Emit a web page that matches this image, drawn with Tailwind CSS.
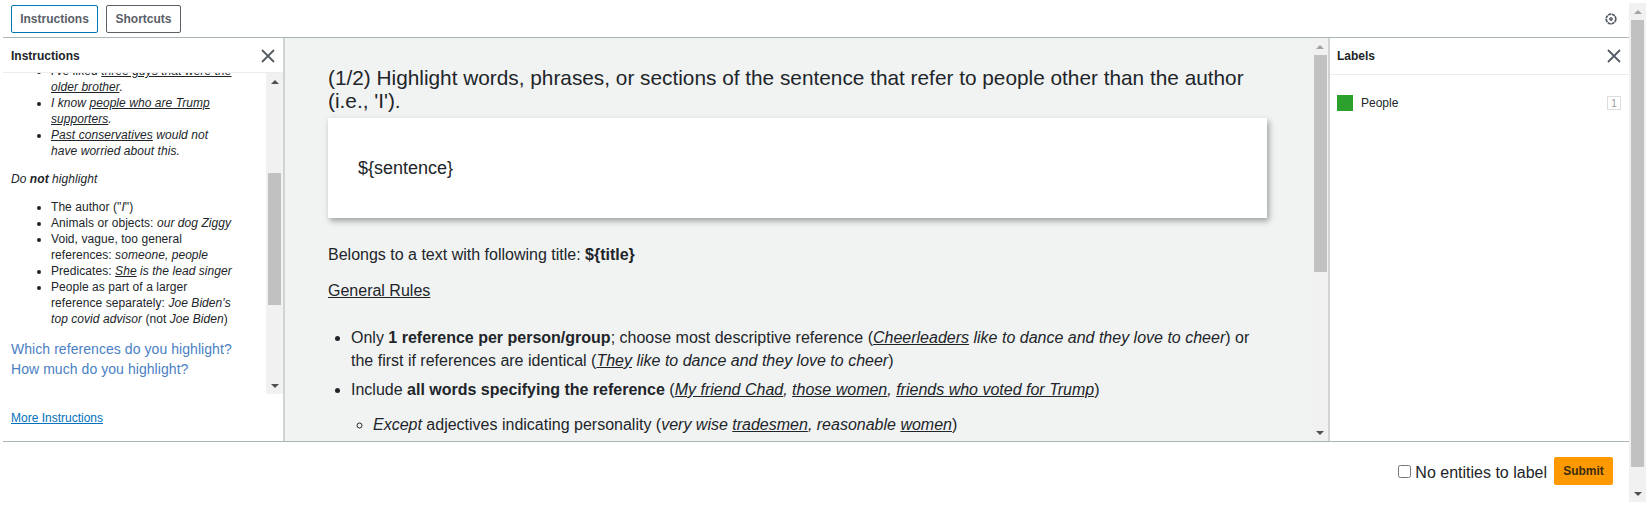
<!DOCTYPE html>
<html lang="en">
<head>
    <meta charset="UTF-8">
    <title>Label Studio task</title>
    <script src="https://cdn.jsdelivr.net/npm/@tailwindcss/browser@4"></script>
</head>
<body class="bg-white font-['Liberation_Sans',Arial,sans-serif] text-[#212529] overflow-hidden">
    <div class="flex h-[499px] mt-[3px] ml-[3px] mr-[6px]">
        <div class="flex flex-col flex-1 min-w-0">
            <!-- Top bar -->
            <div class="flex items-center h-[35px] pb-[2px] pl-[8px] pr-[11px] gap-[8px] border-b border-[#a9b5b5]">
                <button class="h-[28px] w-[87px] rounded-[2px] border border-[#0077b6] text-[12px] font-bold text-[#5a6068]">Instructions</button>
                <button class="h-[28px] w-[75px] rounded-[2px] border border-[#5a6068] text-[12px] font-bold text-[#5a6068]">Shortcuts</button>
                <svg class="ml-auto" width="14" height="14" viewBox="0 0 14 14" fill="none" stroke="#555b63">
                    <circle cx="7" cy="7" r="4.8" stroke-width="1.7" stroke-dasharray="3.2 0.6"/>
                    <circle cx="7" cy="7" r="1.5" fill="#777" stroke-width="0.8"/>
                </svg>
            </div>

            <div class="flex h-[403px] border-b border-[#a9b5b5] box-content">
                <!-- Instructions panel -->
                <div class="flex flex-col w-[282px] border-r-2 border-[#d0d3d3]">
                    <div class="flex items-center justify-between h-[35px] pt-[2px] pl-[8px] pr-[8px] border-b border-[#ececec] text-[12px] font-bold">
                        <span>Instructions</span>
                        <svg width="14" height="14" viewBox="0 0 14 14" stroke="#555b63" stroke-width="1.8"><path d="M1 1l12 12M13 1L1 13"/></svg>
                    </div>
                    <div class="flex h-[321px]">
                        <div class="flex-1 min-w-0 overflow-hidden pl-[8px] text-[12px] leading-[16px] tracking-[0.06px]">
                            <ul class="list-disc pl-[40px] -mt-[10px] w-[223px] italic">
                                <li>I've liked <u>three guys that were the older brother</u>.</li>
                                <li>I know <u>people who are Trump supporters</u>.</li>
                                <li><u>Past conservatives</u> would not have worried about this.</li>
                            </ul>
                            <p class="mt-[12px] italic">Do <b>not</b> highlight</p>
                            <ul class="list-disc pl-[40px] mt-[12px] w-[223px]">
                                <li>The author ("<i>I</i>")</li>
                                <li>Animals or objects: <i>our dog Ziggy</i></li>
                                <li>Void, vague, too general references: <i>someone, people</i></li>
                                <li>Predicates: <i><u>She</u> is the lead singer</i></li>
                                <li>People as part of a larger reference separately: <i>Joe Biden's top covid advisor</i> (not <i>Joe Biden</i>)</li>
                            </ul>
                            <p class="mt-[12px] text-[14px] leading-[20px] tracking-[0.06px] text-[#4a7fc4]">Which references do you highlight?<br>How much do you highlight?</p>
                        </div>
                        <div class="flex flex-col items-center w-[17px] bg-[#f1f1f1]">
                            <div class="flex items-center justify-center h-[17px]"><div class="border-x-[4px] border-b-[4px] border-x-transparent border-b-[#505050]"></div></div>
                            <div class="flex-1 w-[13px]"><div class="w-[13px] h-[132px] mt-[83px] bg-[#c1c1c1]"></div></div>
                            <div class="flex items-center justify-center h-[17px]"><div class="border-x-[4px] border-t-[4px] border-x-transparent border-t-[#505050]"></div></div>
                        </div>
                    </div>
                    <div class="pl-[8px] pt-[16px] text-[12px] leading-[16px]">
                        <a class="underline text-[#0071bc]">More Instructions</a>
                    </div>
                </div>

                <!-- Main task area -->
                <div class="flex flex-1 min-w-0 bg-[#f1f3f3] border-r-2 border-[#d0d3d3]">
                    <div class="flex-1 min-w-0 overflow-hidden pl-[43px] pr-[45px] text-[16px] leading-[23px]">
                        <h1 class="mt-[28px] pr-[15px] text-[20.8px] leading-[23px]">(1/2) Highlight words, phrases, or sections of the sentence that refer to people other than the author (i.e., 'I').</h1>
                        <div class="flex items-center h-[100px] mt-[6px] pl-[30px] bg-white shadow-[2px_3px_6px_rgba(0,0,0,0.35)] text-[18px]">${sentence}</div>
                        <p class="mt-[25px]">Belongs to a text with following title: <b>${title}</b></p>
                        <p class="mt-[13px] underline">General Rules</p>
                        <ul class="list-disc pl-[23px] mt-[24px]">
                            <li>Only <b>1 reference per person/group</b>; choose most descriptive reference (<i><u>Cheerleaders</u> like to dance and they love to cheer</i>) or the first if references are identical (<i><u>They</u> like to dance and they love to cheer</i>)</li>
                            <li class="mt-[6px]">Include <b>all words specifying the reference</b> (<i><u>My friend Chad</u>, <u>those women</u>, <u>friends who voted for Trump</u></i>)
                                <ul class="list-[circle] pl-[22px] mt-[12px]">
                                    <li><i>Except</i> adjectives indicating personality (<i>very wise <u>tradesmen</u>, reasonable <u>women</u></i>)</li>
                                </ul>
                            </li>
                        </ul>
                    </div>
                    <div class="flex flex-col items-start w-[16px] bg-[#f1f1f1]">
                        <div class="flex items-center justify-center w-[15px] h-[17px]"><div class="border-x-[4px] border-b-[4px] border-x-transparent border-b-[#a3a3a3]"></div></div>
                        <div class="flex-1 w-[13px] ml-[2px]"><div class="w-[13px] h-[217px] bg-[#c1c1c1]"></div></div>
                        <div class="flex items-center justify-center w-[15px] h-[17px]"><div class="border-x-[4px] border-t-[4px] border-x-transparent border-t-[#505050]"></div></div>
                    </div>
                </div>

                <!-- Labels panel -->
                <div class="flex flex-col w-[299px]">
                    <div class="flex items-center justify-between h-[37px] pl-[7px] pr-[8px] border-b border-[#ececec] text-[12px] font-bold">
                        <span>Labels</span>
                        <svg width="14" height="14" viewBox="0 0 14 14" stroke="#555b63" stroke-width="1.8"><path d="M1 1l12 12M13 1L1 13"/></svg>
                    </div>
                    <div class="flex items-center mt-[19px] pl-[7px] pr-[8px] text-[12px]">
                        <span class="w-[16px] h-[16px] bg-[#2ca02c]"></span>
                        <span class="ml-[8px]">People</span>
                        <span class="ml-auto flex items-center justify-center w-[14px] h-[14px] border border-[#ddd] text-[10px] text-[#999]">1</span>
                    </div>
                </div>
            </div>

            <!-- Footer -->
            <div class="flex items-center justify-end h-[60px] pr-[16px] pb-[3px]">
                <input type="checkbox" class="w-[13px] h-[13px] mt-[2px]">
                <span class="ml-[4px] text-[16px] mt-[5px]">No entities to label</span>
                <button class="ml-[7px] w-[59px] h-[28px] rounded-[2px] bg-[#ff9900] text-[12px] font-bold text-[#3a2c10]">Submit</button>
            </div>
        </div>

        <!-- Page scrollbar -->
        <div class="flex flex-col items-center w-[17px] bg-[#f1f1f1]">
            <div class="flex items-center justify-center h-[17px]"><div class="border-x-[4px] border-b-[4px] border-x-transparent border-b-[#a3a3a3]"></div></div>
            <div class="flex-1 w-[13px]"><div class="w-[13px] h-[447px] bg-[#c1c1c1]"></div></div>
            <div class="flex items-center justify-center h-[17px]"><div class="border-x-[4px] border-t-[4px] border-x-transparent border-t-[#505050]"></div></div>
        </div>
    </div>
</body>
</html>
